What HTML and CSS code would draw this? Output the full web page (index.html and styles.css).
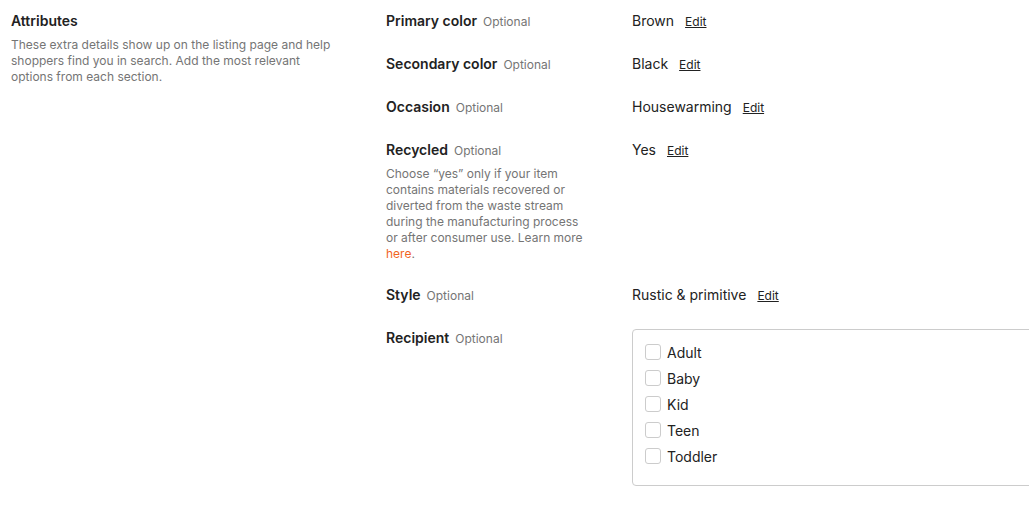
FILE: index.html
```html
<!DOCTYPE html>
<html lang="en">
<head>
    <meta charset="UTF-8">
    <meta name="viewport" content="width=device-width, initial-scale=1.0">
    <title>Attributes</title>
    <link rel="stylesheet" href="styles.css">
</head>
<body>

<div class="section">
    <div class="intro">
        <h2>Attributes</h2>
        <p>These extra details show up on the listing page and help shoppers find you in search. Add the most relevant options from each section.</p>
    </div>

    <div class="fields">
        <div class="field">
            <div class="field-label"><span class="name">Primary color</span><span class="opt">Optional</span></div>
            <div class="field-value"><span>Brown</span><a href="#" class="edit">Edit</a></div>
        </div>
        <div class="field">
            <div class="field-label"><span class="name">Secondary color</span><span class="opt">Optional</span></div>
            <div class="field-value"><span>Black</span><a href="#" class="edit">Edit</a></div>
        </div>
        <div class="field">
            <div class="field-label"><span class="name">Occasion</span><span class="opt">Optional</span></div>
            <div class="field-value"><span>Housewarming</span><a href="#" class="edit">Edit</a></div>
        </div>
        <div class="field">
            <div>
                <div class="field-label"><span class="name">Recycled</span><span class="opt">Optional</span></div>
                <p class="help">Choose “yes” only if your item contains materials recovered or diverted from the waste stream during the manufacturing process or after consumer use. Learn more <a href="#">here</a>.</p>
            </div>
            <div class="field-value"><span>Yes</span><a href="#" class="edit">Edit</a></div>
        </div>
        <div class="field">
            <div class="field-label"><span class="name">Style</span><span class="opt">Optional</span></div>
            <div class="field-value"><span>Rustic &amp; primitive</span><a href="#" class="edit">Edit</a></div>
        </div>
        <div class="field">
            <div class="field-label"><span class="name">Recipient</span><span class="opt">Optional</span></div>
            <div class="checklist">
                <label class="check"><span class="box"></span>Adult</label>
                <label class="check"><span class="box"></span>Baby</label>
                <label class="check"><span class="box"></span>Kid</label>
                <label class="check"><span class="box"></span>Teen</label>
                <label class="check"><span class="box"></span>Toddler</label>
            </div>
        </div>
    </div>
</div>

</body>
</html>
```

FILE: styles.css
```css
body {
    margin: 0;
    padding: 0;
    background: #fff;
    color: #222;
    font-family: Inter, "Noto Sans", Arial, sans-serif;
    overflow: hidden;
}
.section {
    display: flex;
    padding: 11px 0 0 11px;
}
.intro {
    width: 375px;
    flex-shrink: 0;
}
.intro h2 {
    margin: 0;
    font-size: 14px;
    line-height: 20px;
    font-weight: 600;
}
.intro p {
    margin: 6px 0 0;
    width: 330px;
    font-size: 12px;
    line-height: 16px;
    color: #757575;
}
.fields {
    flex: 1;
}
.field {
    display: grid;
    grid-template-columns: 246px 420px;
    align-items: start;
    margin-bottom: 23px;
}
.field-label {
    display: flex;
    align-items: baseline;
    gap: 6px;
    height: 20px;
    line-height: 20px;
}
.name {
    font-size: 14px;
    font-weight: 600;
}
.opt {
    font-size: 12px;
    color: #757575;
}
.help {
    margin: 6px 0 0;
    width: 205px;
    font-size: 12px;
    line-height: 16px;
    color: #757575;
}
.help a {
    color: #f1641e;
    text-decoration: none;
}
.field-value {
    display: flex;
    align-items: baseline;
    gap: 11px;
    height: 20px;
    font-size: 14px;
    line-height: 20px;
}
.edit {
    font-size: 12px;
    color: #222;
    text-decoration: underline;
}
.checklist {
    border: 1px solid #ccc;
    border-radius: 4px;
    padding: 9px 12px 16px;
    margin-top: 1px;
}
.check {
    display: flex;
    align-items: center;
    gap: 6px;
    height: 26px;
    font-size: 14px;
}
.box {
    width: 14px;
    height: 14px;
    border: 1px solid #ccc;
    border-radius: 3px;
}
```
